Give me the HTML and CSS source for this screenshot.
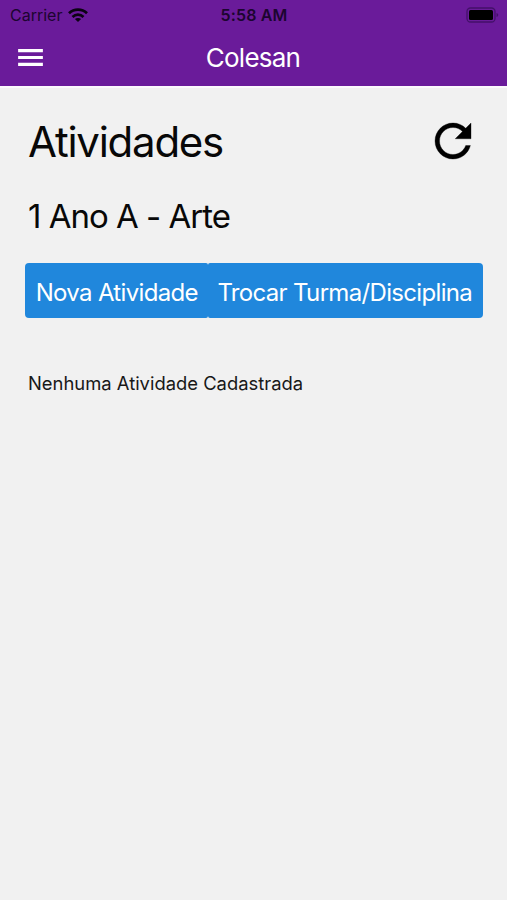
FILE: index.html
```html
<!DOCTYPE html>
<html lang="pt-BR">
<head>
<meta charset="utf-8">
<title>Colesan</title>
<link rel="stylesheet" href="styles.css">
</head>
<body>
<header class="header">
  <div class="status">
    <div class="carrier"><span>Carrier</span>
      <svg class="wifi" viewBox="0 0 20 14" fill="none" stroke="#0b0312" stroke-width="2.7"><path d="M1 5.3C6 .4 14 .4 19 5.3"/><path d="M4.5 8.9C7.7 5.9 12.3 5.9 15.5 8.9"/><path d="M10 14L6.9 11C8.5 9.5 11.5 9.5 13.1 11Z" fill="#0b0312" stroke="none"/></svg>
    </div>
    <span class="time">5:58 AM</span>
    <svg class="battery" viewBox="0 0 33 16"><rect x="1" y="1" width="28" height="14" rx="3.5" fill="none" stroke="#44116a" stroke-width="1.3"/><rect x="3" y="3" width="24" height="10" rx="1.5" fill="#000"/><path d="M30.5 6Q32.3 6.5 32.3 8T30.5 10Z" fill="#44116a"/></svg>
  </div>
  <div class="navbar">
    <svg class="menu" viewBox="0 0 24 24" fill="#fff"><path d="M3 18.1h18v-2.2H3v2.2zm0-5h18v-2.2H3v2.2zm0-7.2v2.2h18V5.9H3z"/></svg>
    <span class="brand">Colesan</span>
  </div>
</header>
<main class="content">
  <div class="heading">
    <h1 class="title">Atividades</h1>
    <svg class="refresh" viewBox="0 0 24 24"><path d="M17.65 6.35C16.2 4.9 14.21 4 12 4c-4.42 0-7.99 3.58-7.99 8s3.57 8 7.99 8c3.73 0 6.84-2.55 7.73-6h-2.08c-.82 2.33-3.04 4-5.65 4-3.31 0-6-2.69-6-6s2.69-6 6-6c1.66 0 3.14.69 4.22 1.78L13 11h7V4l-2.35 2.35z"/></svg>
  </div>
  <h2 class="subtitle">1 Ano A <span class="dash">-</span> Arte</h2>
  <div class="actions">
    <button class="button button-new">Nova Atividade</button>
    <button class="button button-switch">Trocar Turma/Disciplina</button>
  </div>
  <p class="empty">Nenhuma Atividade Cadastrada</p>
</main>
</body>
</html>
```
FILE: styles.css
```css
* { box-sizing: border-box; }
body { margin: 0; min-height: 900px; background: #f1f1f1; color: #080808; font-family: Inter, "Liberation Sans", sans-serif; }
h1, h2, p { margin: 0; font-weight: 400; white-space: nowrap; }
.header { height: 88px; border-bottom: 2px solid #fbf9fc; background: #6a1b9a; background-clip: padding-box; }
.status { display: grid; grid-template-columns: 1fr auto 1fr; align-items: center; height: 29px; padding: 0 8px 0 10px; color: #1c0530; font-size: 16px; line-height: 20px; }
.carrier { display: flex; align-items: center; gap: 6px; }
.wifi { width: 20px; height: 14px; }
.time { font-weight: 600; letter-spacing: 0.15px; margin-right: 1px; }
.battery { width: 33px; height: 16px; justify-self: end; }
.navbar { display: grid; grid-template-columns: 33px 1fr 33px; align-items: center; height: 57px; padding: 0 14px; color: #fff; }
.menu { width: 33px; height: 33px; }
.brand { justify-self: center; margin-right: 1px; font-size: 26px; line-height: 32px; letter-spacing: -0.75px; }
.content { padding: 24px 24px 0 25px; }
.heading { display: flex; align-items: center; justify-content: space-between; height: 60px; padding: 0 3px; }
.title { font-size: 42px; line-height: 60px; letter-spacing: -1.25px; }
.refresh { width: 54px; height: 54px; margin-top: -2px; fill: #000; stroke: #000; stroke-width: 0.15px; }
.subtitle { margin-top: 24px; padding-left: 3px; font-size: 33px; line-height: 40px; letter-spacing: -1px; }
.dash { position: relative; top: 1px; }
.actions { display: grid; grid-template-columns: 182.5px 275.5px; margin-top: 27px; }
.button { height: 55px; padding: 4px 0 0; border: 0; border-radius: 4px; background: #2087dc; color: #fff; font: 400 24px/30px Inter, "Liberation Sans", sans-serif; letter-spacing: -0.67px; white-space: nowrap; }
.button-new { padding-left: 1px; border-radius: 4px 2px 2px 4px; }
.button-switch { padding-right: 1px; border-radius: 2px 4px 4px 2px; }
.empty { margin-top: 53px; padding-left: 3px; color: #181818; font-size: 18.4px; line-height: 24px; }
```
